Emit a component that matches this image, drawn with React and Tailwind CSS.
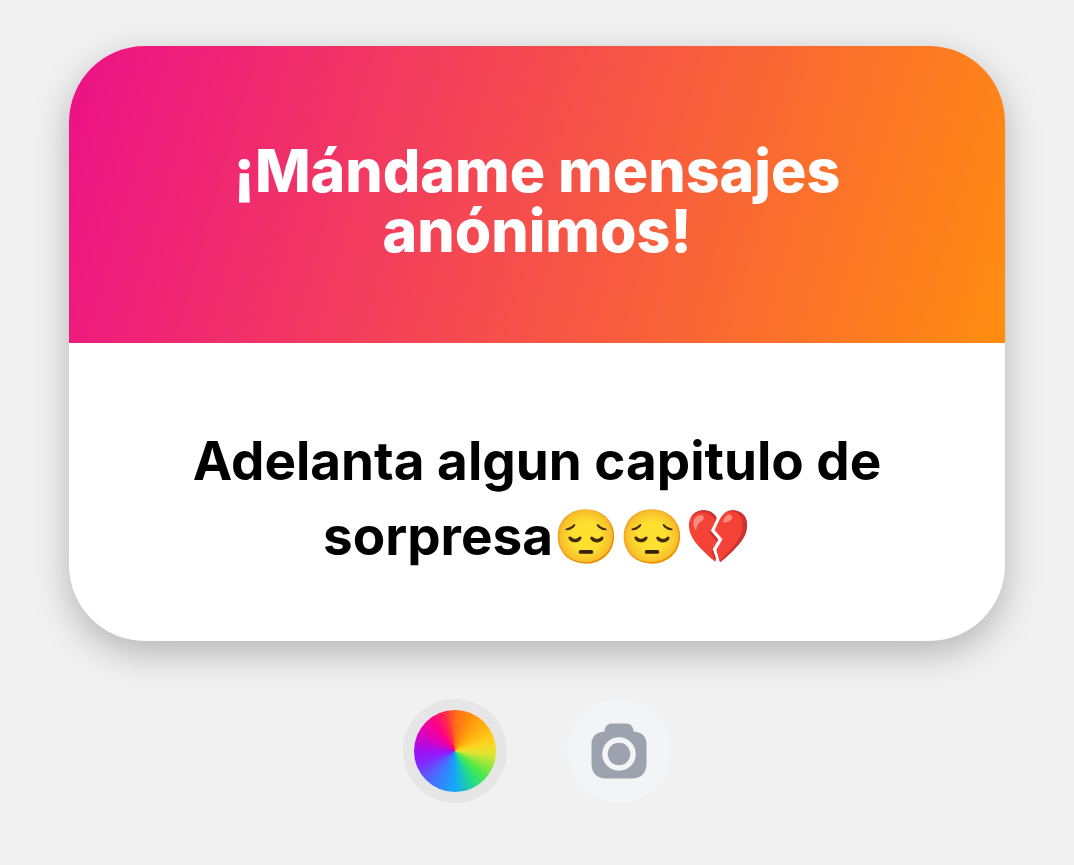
const PROMPT = '¡Mándame mensajes anónimos!'
const MESSAGE = 'Adelanta algun capitulo de sorpresa😔😔💔'

export default function App() {
  return (
    <main className="min-h-screen bg-[#f1f1f1] px-[69px] pt-[46px] pb-[62px] font-['Inter',sans-serif]">
      <MessageCard prompt={PROMPT} message={MESSAGE} />

      {/* Background pickers */}
      <div className="mt-[58px] flex justify-center gap-[60px]">
        <button
          type="button"
          aria-label="Color"
          className="flex size-[104px] items-center justify-center rounded-full bg-[#e6e6e6]"
        >
          <span className="size-[82px] rounded-full bg-[conic-gradient(#ff6a1a,#ff9a0a_30deg,#ffd21f_75deg,#e0e52f_95deg,#4ee84a_130deg,#22dd88_150deg,#12a8f8_180deg,#4a6cff_220deg,#8a20ff_255deg,#a010f0_270deg,#e000b8_300deg,#ff0088_325deg,#ff2a4a_345deg,#ff6a1a)]" />
        </button>
        <button
          type="button"
          aria-label="Cámara"
          className="flex size-[104px] items-center justify-center rounded-full bg-[#f3f4f6]"
        >
          <CameraIcon />
        </button>
      </div>
    </main>
  )
}

function MessageCard({ prompt, message }) {
  return (
    <section className="overflow-hidden rounded-[76px] bg-white text-center shadow-[0_12px_36px_rgba(0,0,0,0.25)]">
      <header className="bg-[linear-gradient(106deg,#ec1187,#ff8d10)] px-[120px] pt-[95px] pb-[82px]">
        <h1 className="text-[59px] leading-[60px] font-extrabold text-white">{prompt}</h1>
      </header>
      <p className="px-[110px] pt-[81px] pb-[67px] text-[53px] leading-[75px] font-bold text-black">
        {message}
      </p>
    </section>
  )
}

function CameraIcon() {
  return (
    <svg viewBox="0 0 56 56" className="size-[56px]" aria-hidden="true">
      <path
        fill="#9ca3af"
        d="M21 0.5H35C39.5 0.5 42.5 3.5 42.5 8.5C51 9 55.5 14 55.5 21V41C55.5 50 50 55.5 41 55.5H15C6 55.5 0.5 50 0.5 41V21C0.5 14 5 9 13.5 8.5C13.5 3.5 16.5 0.5 21 0.5Z"
      />
      <circle cx="28" cy="31" r="14" fill="none" stroke="#f3f4f6" strokeWidth="5.5" />
    </svg>
  )
}
